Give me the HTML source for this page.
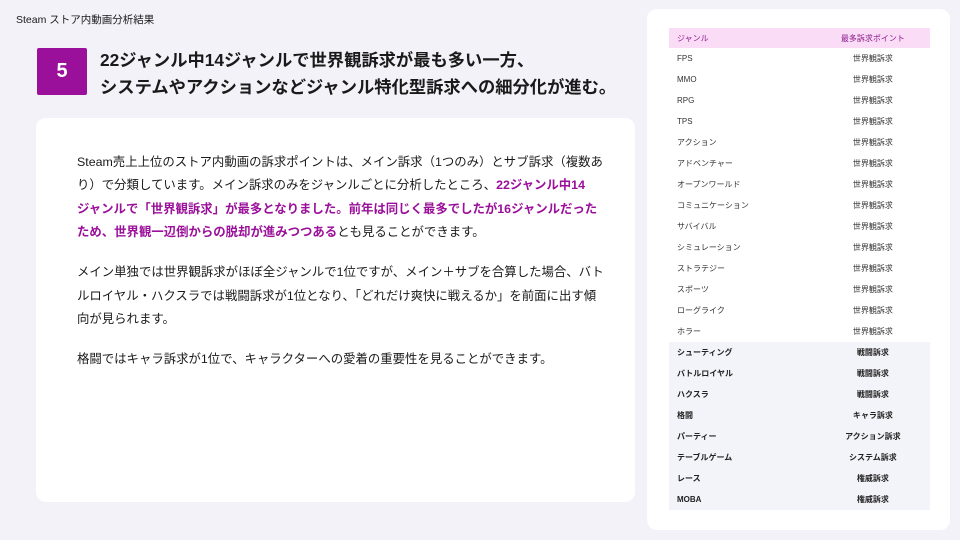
<!DOCTYPE html>
<html><head><meta charset="utf-8"><style>
*{margin:0;padding:0;box-sizing:border-box}
body{width:960px;height:540px;background:#f3f2f8;font-family:"Liberation Sans","Noto Sans CJK JP",sans-serif;color:#1a1a1a;position:relative;overflow:hidden}
.crumb{position:absolute;left:16px;top:12px;font-size:10.5px}
.badge{position:absolute;left:37px;top:48px;width:50px;height:47px;background:#9b109a;color:#fff;font-size:20px;font-weight:bold;display:flex;align-items:center;justify-content:center;border-radius:2px}
.title{position:absolute;left:100px;top:47px;font-size:17.3px;font-weight:bold;line-height:27px;white-space:nowrap}
.card{position:absolute;left:36px;top:118px;width:599px;height:384px;background:#fff;border-radius:10px}
.body{position:absolute;left:77px;top:151px;font-size:12.4px;line-height:23.4px;white-space:nowrap}
.body p{margin-bottom:16.5px}
.hl{color:#9b109a;font-weight:bold}
.rc{position:absolute;left:647px;top:9px;width:303px;height:521px;background:#fff;border-radius:10px}
table{position:absolute;left:669px;top:28px;width:261px;border-collapse:collapse;font-size:8px}
td{height:21px;padding-left:8px;color:#333}
td+td{text-align:center;padding-left:18px}
tr.h td{height:20px;background:#fadcf6;color:#8a1a8a}
tr.b td{background:#f3f3fa;font-weight:bold;color:#222}
</style></head><body>
<div class="crumb">Steam ストア内動画分析結果</div>
<div class="badge">5</div>
<div class="title">22ジャンル中14ジャンルで世界観訴求が最も多い一方、<br>システムやアクションなどジャンル特化型訴求への細分化が進む。</div>
<div class="card"></div>
<div class="body"><p>Steam売上上位のストア内動画の訴求ポイントは、メイン訴求（1つのみ）とサブ訴求（複数あ<br>り）で分類しています。メイン訴求のみをジャンルごとに分析したところ、<span class="hl">22ジャンル中14</span><br><span class="hl">ジャンルで「世界観訴求」が最多となりました。前年は同じく最多でしたが16ジャンルだった</span><br><span class="hl">ため、世界観一辺倒からの脱却が進みつつある</span>とも見ることができます。</p><p>メイン単独では世界観訴求がほぼ全ジャンルで1位ですが、メイン＋サブを合算した場合、バト<br>ルロイヤル・ハクスラでは戦闘訴求が1位となり、「どれだけ爽快に戦えるか」を前面に出す傾<br>向が見られます。</p><p>格闘ではキャラ訴求が1位で、キャラクターへの愛着の重要性を見ることができます。</p></div>
<div class="rc"></div>
<table>
<tr class="h"><td>ジャンル</td><td>最多訴求ポイント</td></tr>
<tr><td>FPS</td><td>世界観訴求</td></tr>
<tr><td>MMO</td><td>世界観訴求</td></tr>
<tr><td>RPG</td><td>世界観訴求</td></tr>
<tr><td>TPS</td><td>世界観訴求</td></tr>
<tr><td>アクション</td><td>世界観訴求</td></tr>
<tr><td>アドベンチャー</td><td>世界観訴求</td></tr>
<tr><td>オープンワールド</td><td>世界観訴求</td></tr>
<tr><td>コミュニケーション</td><td>世界観訴求</td></tr>
<tr><td>サバイバル</td><td>世界観訴求</td></tr>
<tr><td>シミュレーション</td><td>世界観訴求</td></tr>
<tr><td>ストラテジー</td><td>世界観訴求</td></tr>
<tr><td>スポーツ</td><td>世界観訴求</td></tr>
<tr><td>ローグライク</td><td>世界観訴求</td></tr>
<tr><td>ホラー</td><td>世界観訴求</td></tr>
<tr class="b"><td>シューティング</td><td>戦闘訴求</td></tr>
<tr class="b"><td>バトルロイヤル</td><td>戦闘訴求</td></tr>
<tr class="b"><td>ハクスラ</td><td>戦闘訴求</td></tr>
<tr class="b"><td>格闘</td><td>キャラ訴求</td></tr>
<tr class="b"><td>パーティー</td><td>アクション訴求</td></tr>
<tr class="b"><td>テーブルゲーム</td><td>システム訴求</td></tr>
<tr class="b"><td>レース</td><td>権威訴求</td></tr>
<tr class="b"><td>MOBA</td><td>権威訴求</td></tr>
</table>
</body></html>
